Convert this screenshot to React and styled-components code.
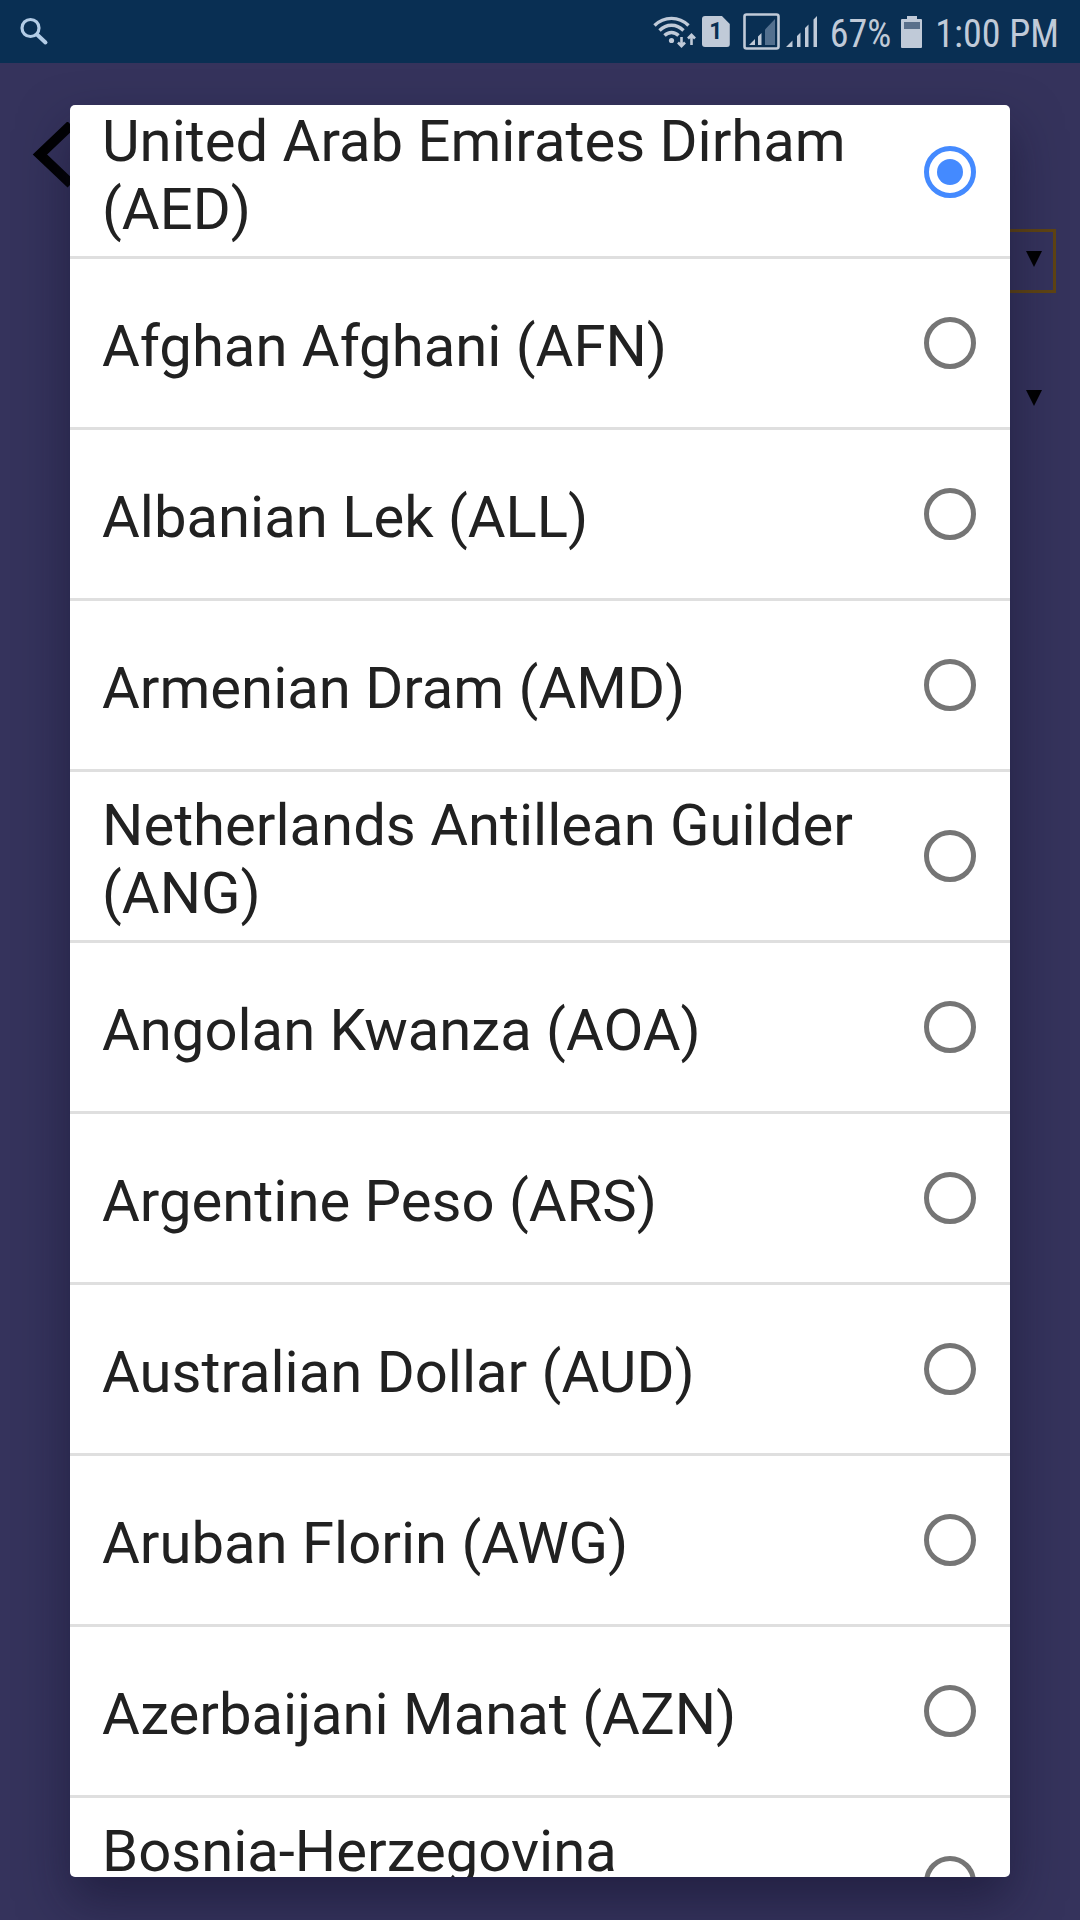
import React, { useLayoutEffect, useRef, useState } from "react";
import styled, { createGlobalStyle } from "styled-components";

const GlobalStyle = createGlobalStyle`
  * {
    box-sizing: border-box;
  }

  body {
    margin: 0;
    background: #35335c;
    font-family: Roboto, "Noto Sans", sans-serif;
  }
`;

const Screen = styled.div`
  position: relative;
  display: flex;
  flex-direction: column;
  height: 100vh;
  overflow: hidden;
`;

const StatusBar = styled.header`
  display: flex;
  align-items: center;
  justify-content: space-between;
  height: 63px;
  padding: 0 21px 0 18px;
  background: #092f53;
  color: #c0cad8;
  flex-shrink: 0;
`;

const StatusGroup = styled.div`
  display: flex;
  align-items: center;
`;

const StatusText = styled.span`
  padding-top: 4px;
  margin-left: 12px;
  font-family: "Roboto Condensed", Roboto, sans-serif;
  font-size: 38px;
  line-height: 44px;
  white-space: nowrap;
`;

const StatusIcon = styled.svg`
  display: block;
  margin-left: ${({ $gap }) => $gap || 0}px;
`;

const Page = styled.main`
  flex: 1;
  padding: 59px 24px 0;
`;

const BackButton = styled.button`
  display: block;
  margin-bottom: 40px;
  padding: 0 8px;
  border: 0;
  background: none;

  svg {
    display: block;
  }
`;

const SelectBox = styled.div`
  display: flex;
  align-items: center;
  height: 64px;
  margin: 0 0 75px 60px;
  padding: 0 11px 4px 0;
  border: 3px solid ${({ $active }) => ($active ? "#5f4413" : "transparent")};
`;

const Select = styled.select`
  flex: 1;
  height: 100%;
  border: 0;
  background: none;
  color: #000;
  font: inherit;
  font-size: 40px;
  appearance: none;
`;

const Overlay = styled.div`
  position: absolute;
  inset: 63px 0 0;
  padding: 42px 70px 43px;
`;

const Dialog = styled.div`
  height: 100%;
  overflow-y: auto;
  border-radius: 5px;
  background: #fff;
  box-shadow: 0 24px 50px rgba(16, 14, 42, 0.5);
  scrollbar-width: none;
`;

const Option = styled.label`
  display: flex;
  align-items: center;
  justify-content: space-between;
  gap: 34px;
  height: 171px;
  padding: 0 34px 0 32px;
  border-bottom: 3px solid #dfdfdf;
  color: #212121;
`;

const OptionText = styled.span`
  padding-top: 6px;
  font-size: 58px;
  line-height: 68px;
`;

const Radio = styled.input`
  display: grid;
  place-items: center;
  flex-shrink: 0;
  width: 52px;
  height: 52px;
  margin: 0;
  border: 5px solid #757575;
  border-radius: 50%;
  appearance: none;

  &:checked {
    border-color: #448aff;
  }

  &:checked::before {
    content: "";
    width: 26px;
    height: 26px;
    border-radius: 50%;
    background: #448aff;
  }
`;

const currencies = [
  { code: "AED", name: "United Arab Emirates Dirham" },
  { code: "AFN", name: "Afghan Afghani" },
  { code: "ALL", name: "Albanian Lek" },
  { code: "AMD", name: "Armenian Dram" },
  { code: "ANG", name: "Netherlands Antillean Guilder" },
  { code: "AOA", name: "Angolan Kwanza" },
  { code: "ARS", name: "Argentine Peso" },
  { code: "AUD", name: "Australian Dollar" },
  { code: "AWG", name: "Aruban Florin" },
  { code: "AZN", name: "Azerbaijani Manat" },
  { code: "BAM", name: "Bosnia-Herzegovina Convertible Mark" },
];

const SearchIcon = () => (
  <StatusIcon width="32" height="32" viewBox="0 0 32 32" fill="none" stroke="#b3cce6">
    <circle cx="12.5" cy="12" r="8.5" strokeWidth="3.2" />
    <path d="M19 18.5 27.5 26.5" strokeWidth="4" strokeLinecap="round" />
  </StatusIcon>
);

const WifiIcon = () => (
  <StatusIcon width="43" height="34" viewBox="0 0 43 34" fill="none" stroke="currentColor">
    <path d="M1.5 10.5C11 1 26 1 35.5 10.5M6.5 15.5C13.5 8.5 23.5 8.5 30.5 15.5M11.5 20.5C15.5 16.5 21.5 16.5 25.5 20.5" strokeWidth="3.4" />
    <circle cx="18.5" cy="25.5" r="2.6" fill="currentColor" stroke="none" />
    <path d="M28.5 22v9M25 27.5l3.5 3.7 3.5-3.7M38.5 30v-10M35 23.5l3.5-3.7 3.5 3.7" strokeWidth="2.6" />
  </StatusIcon>
);

const SimCard = styled.span`
  display: block;
  width: 28px;
  height: 31px;
  margin-left: 6px;
  border-radius: 3px;
  background: #c0cad8;
  clip-path: polygon(0 0, 72% 0, 100% 26%, 100% 100%, 0 100%);
  color: #092f53;
  font-size: 23px;
  font-weight: 700;
  line-height: 32px;
  text-align: center;
`;

const BoxedSignalIcon = () => (
  <StatusIcon $gap={13} width="38" height="38" viewBox="0 0 38 38">
    <rect x="1.5" y="1.5" width="34" height="34" rx="2" fill="none" stroke="currentColor" strokeWidth="2.6" />
    <path d="M6 32 12 26v6zM15 23.5 18.5 20v12H15z" fill="currentColor" />
    <path d="M22 16.5 32 6v26H22z" fill="#53708f" />
  </StatusIcon>
);

const SignalIcon = () => (
  <StatusIcon $gap={5} width="32" height="32" viewBox="0 0 32 32" fill="currentColor">
    <path d="M0 31 6.5 24.5V31zM11 20l3.5-3.5V31H11zM19 12l3.5-3.5V31H19zM27.5 3.5 31 0v31h-3.5z" />
  </StatusIcon>
);

const BatteryIcon = () => (
  <StatusIcon $gap={10} width="22" height="32" viewBox="0 0 22 32">
    <path d="M6 0h10v3h4a1 1 0 0 1 1 1v27a1 1 0 0 1-1 1H1a1 1 0 0 1-1-1V4a1 1 0 0 1 1-1h5z" fill="currentColor" />
    <path d="M3 6h16v7H3z" fill="#5a708b" />
  </StatusIcon>
);

const CaretIcon = () => (
  <svg width="16" height="16" viewBox="0 0 16 16">
    <path d="M0 0h16L8 16z" />
  </svg>
);

const App = () => {
  const [selected, setSelected] = useState("AED");
  const dialogRef = useRef(null);

  useLayoutEffect(() => {
    dialogRef.current.scrollTop = 17;
  }, []);

  return (
    <>
      <GlobalStyle />
      <Screen>
        <StatusBar>
          <SearchIcon />
          <StatusGroup>
            <WifiIcon />
            <SimCard>1</SimCard>
            <BoxedSignalIcon />
            <SignalIcon />
            <StatusText>67%</StatusText>
            <BatteryIcon />
            <StatusText>1:00 PM</StatusText>
          </StatusGroup>
        </StatusBar>

        <Page>
          <BackButton aria-label="Back">
            <svg width="48" height="67" viewBox="0 0 48 67" fill="none" stroke="#000" strokeWidth="10">
              <path d="M39 3 8 32.500 39 62" />
            </svg>
          </BackButton>
          <SelectBox $active>
            <Select aria-label="From currency" />
            <CaretIcon />
          </SelectBox>
          <SelectBox>
            <Select aria-label="To currency" />
            <CaretIcon />
          </SelectBox>
        </Page>

        <Overlay>
          <Dialog ref={dialogRef} role="dialog" aria-label="Currency">
            {currencies.map(({ code, name }) => (
              <Option key={code}>
                <OptionText>{`${name} (${code})`}</OptionText>
                <Radio
                  type="radio"
                  name="currency"
                  value={code}
                  checked={selected === code}
                  onChange={() => setSelected(code)}
                />
              </Option>
            ))}
          </Dialog>
        </Overlay>
      </Screen>
    </>
  );
};

export default App;
